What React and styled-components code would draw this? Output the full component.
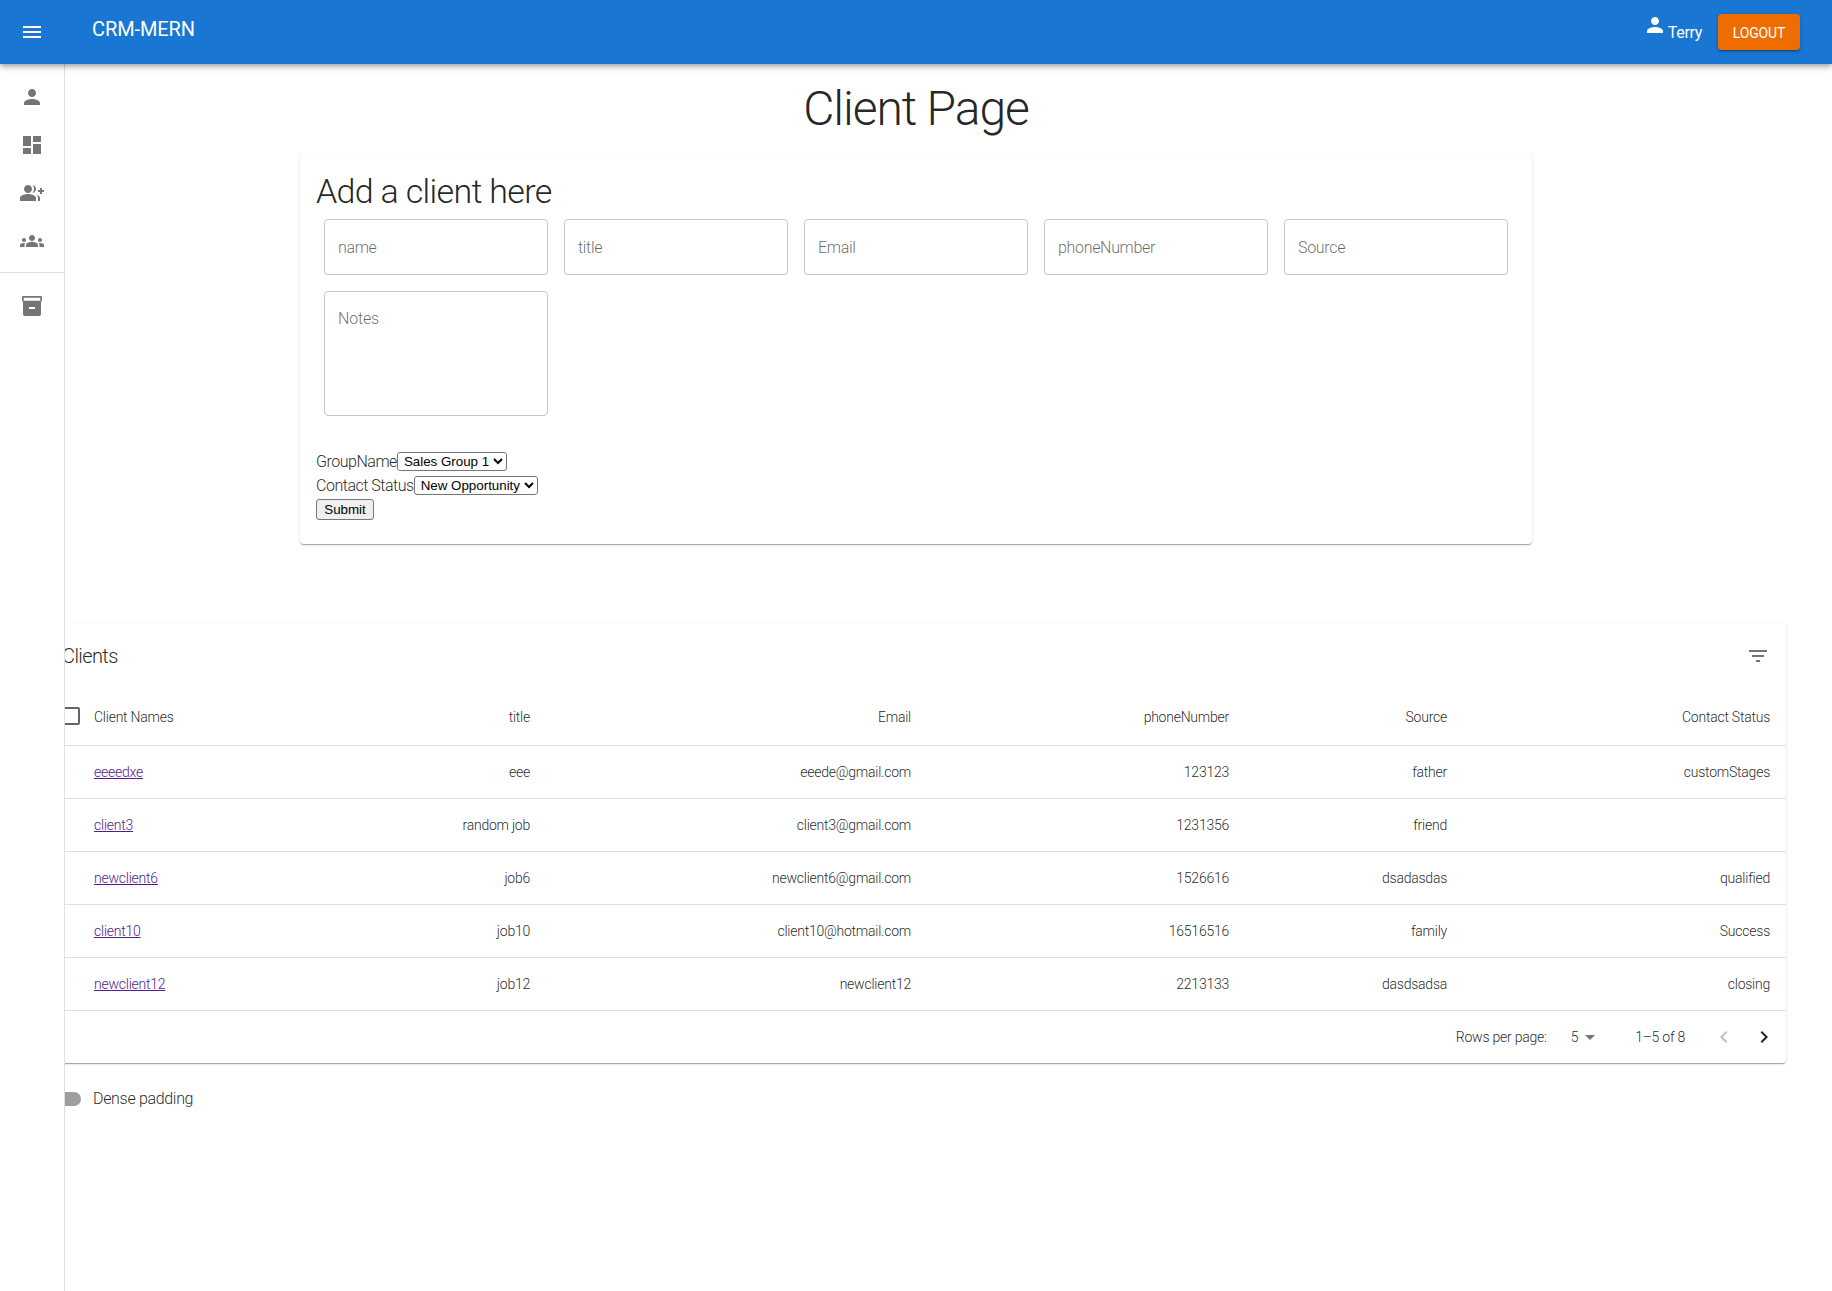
import React from "react";
import styled, { createGlobalStyle } from "styled-components";

const FONT = `Roboto, "Open Sans", "Liberation Sans", sans-serif`;
const NATIVE = `"Liberation Sans", Arial, sans-serif`;

const Global = createGlobalStyle`
  html, body { margin: 0; padding: 0; background: #fff; }
  body { font-family: ${FONT}; font-weight: 300; color: rgba(0,0,0,.87); font-size: 16px; letter-spacing: -0.015em; }
  * { box-sizing: border-box; }
`;

const Shell = styled.div`
  position: relative;
  min-height: 1291px;
  overflow: hidden;
`;
const AppBar = styled.header`
  position: relative;
  z-index: 3;
  height: 64px;
  background: #1976d2;
  color: #fff;
  display: flex;
  align-items: center;
  padding: 0 32px 0 20px;
  box-shadow: 0 2px 4px -1px rgba(0,0,0,.2), 0 4px 5px 0 rgba(0,0,0,.14), 0 1px 10px 0 rgba(0,0,0,.12);
`;
const Brand = styled.div`
  font-size: 20px;
  font-weight: 400;
  letter-spacing: -0.005em;
  margin-left: 48px;
  position: relative;
  top: -3px;
`;
const Spacer = styled.div` flex: 1; `;
const UserBox = styled.div`
  display: flex;
  align-items: center;
  height: 48px;
`;
const UserName = styled.span`
  display: inline-flex;
  align-items: center;
  font-size: 16px;
  font-weight: 400;
  letter-spacing: -0.02em;
  margin-right: 16px;
  svg { position: relative; top: -7px; margin-right: 1px; }
`;
const Logout = styled.button`
  height: 36px;
  width: 82px;
  padding: 1px 0 0;
  border: 0;
  border-radius: 4px;
  background: #ef6c00;
  color: #fff;
  font-family: ${FONT};
  font-size: 14px;
  font-weight: 400;
  letter-spacing: -0.01em;
  text-transform: uppercase;
  box-shadow: 0 3px 1px -2px rgba(0,0,0,.2), 0 2px 2px 0 rgba(0,0,0,.14), 0 1px 5px 0 rgba(0,0,0,.12);
`;
const Sidebar = styled.nav`
  position: absolute;
  z-index: 2;
  left: 0;
  top: 64px;
  bottom: 0;
  width: 65px;
  background: #fff;
  border-right: 1px solid #e0e0e0;
`;
const NavList = styled.div` padding: 9px 0 7px; `;
const NavItem = styled.div`
  height: 48px;
  display: flex;
  align-items: center;
  padding-left: 20px;
  color: #757575;
`;
const Divider = styled.div` height: 1px; background: #e0e0e0; `;
const Main = styled.main`
  padding: 0 46px;
`;
const PageTitle = styled.h1`
  margin: 17px 0 16px;
  font-size: 48px;
  line-height: 56px;
  font-weight: 300;
  letter-spacing: -0.023em;
  text-align: center;
`;
const FormCard = styled.section`
  width: 1232px;
  margin: 0 auto 80px;
  height: 391px;
  padding: 16px;
  background: #fff;
  border-radius: 4px;
  box-shadow: 0 2px 1px -1px rgba(0,0,0,.2), 0 1px 1px 0 rgba(0,0,0,.14), 0 1px 3px 0 rgba(0,0,0,.12);
`;
const FormTitle = styled.h2`
  margin: 0;
  padding-top: 1px;
  height: 42px;
  font-size: 34px;
  line-height: 42px;
  font-weight: 300;
  letter-spacing: -0.02em;
`;
const Fields = styled.div`
  display: flex;
  flex-wrap: wrap;
  gap: 16px;
  padding: 8px 8px 0;
`;
const Input = styled.input`
  width: 224px;
  height: 56px;
  padding: 0 13px;
  border: 1px solid #c4c4c4;
  border-radius: 4px;
  outline: 0;
  font-family: ${FONT};
  font-size: 16px;
  font-weight: 300;
  letter-spacing: -0.02em;
  &::placeholder { color: rgba(0,0,0,.6); opacity: 1; }
`;
const Notes = styled.textarea`
  width: 224px;
  height: 125px;
  padding: 17px 13px;
  border: 1px solid #c4c4c4;
  border-radius: 4px;
  outline: 0;
  resize: none;
  font-family: ${FONT};
  font-size: 16px;
  font-weight: 300;
  line-height: 19px;
  letter-spacing: -0.01em;
  &::placeholder { color: rgba(0,0,0,.6); opacity: 1; }
`;
const SelectRows = styled.div`
  margin-top: 33px;
`;
const SelectRow = styled.div`
  height: 24px;
  display: flex;
  align-items: center;
  font-size: 16px;
  letter-spacing: -0.03em;
`;
const NativeSelect = styled.select`
  font-family: ${NATIVE};
  font-size: 13.33px;
  letter-spacing: 0;
  height: 19px;
  padding: 0 0 0 2px;
  background: #fff;
  color: #000;
  border: 1px solid #767676;
  border-radius: 3px;
`;
const Submit = styled.button`
  font-family: ${NATIVE};
  font-size: 13.33px;
  letter-spacing: 0;
  width: 58px;
  height: 21px;
  padding: 0;
  color: #000;
  background: #efefef;
  border: 1px solid #767676;
  border-radius: 3px;
`;
const TableCard = styled.section`
  background: #fff;
  border-radius: 4px;
  box-shadow: 0 2px 1px -1px rgba(0,0,0,.2), 0 1px 1px 0 rgba(0,0,0,.14), 0 1px 3px 0 rgba(0,0,0,.12);
`;
const TableBar = styled.div`
  height: 64px;
  display: flex;
  align-items: center;
  justify-content: space-between;
  padding: 0 16px;
  color: #757575;
`;
const TableTitle = styled.div`
  font-size: 20px;
  letter-spacing: -0.03em;
  color: rgba(0,0,0,.87);
`;
const Table = styled.table`
  width: 100%;
  border-collapse: collapse;
  table-layout: fixed;
`;
const Row = styled.tr`
  height: ${p => (p.$head ? 57 : 53)}px;
  border-bottom: 1px solid #e0e0e0;
`;
const Cell = styled.td`
  padding: ${p => (p.as === "th" ? "2px" : "0")} 16px 0;
  font-size: 14px;
  font-weight: 300;
  text-align: ${p => (p.$left ? "left" : "right")};
  color: rgba(0,0,0,.87);
`;
const CheckCell = styled.th`
  padding: 0 0 0 13px;
  line-height: 0;
  text-align: left;
  color: #666;
`;
const NameCell = styled(Cell)`
  padding-left: 0;
`;
const ClientLink = styled.a`
  color: #551a8b;
  text-decoration: underline;
`;
const Pager = styled.div`
  height: 52px;
  display: flex;
  align-items: center;
  justify-content: flex-end;
  font-size: 14px;
  padding-right: 10px;
`;
const PagerLabel = styled.span` margin-right: 24px; `;
const PagerSelect = styled.span`
  display: inline-flex;
  align-items: center;
  margin-right: 33px;
  svg { color: #757575; }
`;
const PagerRange = styled.span` margin-right: 27px; `;
const PagerBtn = styled.span`
  display: inline-flex;
  width: 24px;
  margin-left: ${p => (p.$gap ? 16 : 0)}px;
  color: ${p => (p.$off ? "rgba(0,0,0,.26)" : "rgba(0,0,0,.87)")};
`;
const DenseRow = styled.label`
  display: flex;
  align-items: center;
  height: 38px;
  margin-top: 17px;
  font-size: 16px;
  letter-spacing: -0.02em;
`;
const Track = styled.span`
  display: block;
  width: 34px;
  height: 14px;
  margin: 0 12px 0 1px;
  border-radius: 7px;
  background: #9e9e9e;
`;

const Icon = ({ d, size = 24, rule }) => (
  <svg width={size} height={size} viewBox="0 0 24 24" fill="currentColor">
    <path d={d} fillRule={rule} />
  </svg>
);

const P = {
  menu: "M3 18h18v-2H3v2zm0-5h18v-2H3v2zm0-7v2h18V6H3z",
  person: "M12 12c2.21 0 4-1.79 4-4s-1.79-4-4-4-4 1.79-4 4 1.79 4 4 4zm0 2c-2.67 0-8 1.34-8 4v2h16v-2c0-2.66-5.33-4-8-4z",
  dash: "M3 13h8V3H3v10zm0 8h8v-6H3v6zm10 0h8V11h-8v10zm0-18v6h8V3h-8z",
  groupAdd: "M22 9V7h-2v2h-2v2h2v2h2v-2h2V9zM8 12c2.21 0 4-1.79 4-4s-1.79-4-4-4-4 1.79-4 4 1.79 4 4 4zm0 1c-2.67 0-8 1.34-8 4v3h16v-3c0-2.66-5.33-4-8-4zm4.51-8.950C13.430 5.110 14 6.490 14 8s-.57 2.890-1.490 3.950C14.470 11.700 16 10.040 16 8s-1.530-3.700-3.490-3.950zm4.020 9.780C17.420 14.660 18 15.700 18 17v3h2v-3c0-1.450-1.590-2.510-3.470-3.170z",
  groups: "M12 12.75c1.63 0 3.07.39 4.24.9 1.08.48 1.76 1.56 1.76 2.73V18H6v-1.61c0-1.18.68-2.26 1.76-2.73 1.17-.52 2.61-.91 4.24-.91zM4 13c1.1 0 2-.9 2-2s-.9-2-2-2-2 .9-2 2 .9 2 2 2zm1.13 1.1c-.37-.06-.74-.1-1.13-.1-.99 0-1.93.21-2.78.58C.48 14.9 0 15.62 0 16.43V18h4.5v-1.61c0-.83.23-1.61.63-2.29zM20 13c1.1 0 2-.9 2-2s-.9-2-2-2-2 .9-2 2 .9 2 2 2zm4 3.43c0-.81-.48-1.53-1.22-1.85-.85-.37-1.79-.58-2.78-.58-.39 0-.76.04-1.13.1.4.68.63 1.46.63 2.29V18H24v-1.57zM12 6c1.66 0 3 1.34 3 3s-1.34 3-3 3-3-1.34-3-3 1.34-3 3-3z",
  archive: "M3 2h18a1 1 0 0 1 1 1v3.5a1 1 0 0 1-1 1V20a2 2 0 0 1-2 2H5a2 2 0 0 1-2-2V7.500a1 1 0 0 1-1-1V3a1 1 0 0 1 1-1zm.7 1.700V6.700h16.600V3.700H3.700zM9 13v2h6v-2H9z",
  filter: "M10 18h4v-2h-4v2zM3 6v2h18V6H3zm3 7h12v-2H6v2z",
  check: "M19 5v14H5V5h14m0-2H5c-1.100 0-2 .9-2 2v14c0 1.100.9 2 2 2h14c1.100 0 2-.9 2-2V5c0-1.100-.9-2-2-2z",
  caret: "M7 10l5 5 5-5z",
  prev: "M15.410 7.410L14 6l-6 6 6 6 1.410-1.410L10.830 12z",
  next: "M10 6L8.590 7.410 13.170 12l-4.580 4.590L10 18l6-6z",
};

const rows = [
  ["eeeedxe", "eee", "eeede@gmail.com", "123123", "father", "customStages"],
  ["client3", "random job", "client3@gmail.com", "1231356", "friend", ""],
  ["newclient6", "job6", "newclient6@gmail.com", "1526616", "dsadasdas", "qualified"],
  ["client10", "job10", "client10@hotmail.com", "16516516", "family", "Success"],
  ["newclient12", "job12", "newclient12", "2213133", "dasdsadsa", "closing"],
];
const colWidths = [48, 250, 202, 381, 318, 218, 323];

export default function App() {
  return (
    <Shell>
      <Global />
      <AppBar>
        <Icon d={P.menu} />
        <Brand>CRM-MERN</Brand>
        <Spacer />
        <UserBox>
          <UserName>
            <Icon d={P.person} />
            <span>Terry</span>
          </UserName>
          <Logout>Logout</Logout>
        </UserBox>
      </AppBar>
      <Sidebar>
        <NavList>
          <NavItem><Icon d={P.person} /></NavItem>
          <NavItem><Icon d={P.dash} /></NavItem>
          <NavItem><Icon d={P.groupAdd} /></NavItem>
          <NavItem><Icon d={P.groups} /></NavItem>
        </NavList>
        <Divider />
        <NavList>
          <NavItem><Icon d={P.archive} rule="evenodd" /></NavItem>
        </NavList>
      </Sidebar>
      <Main>
        <PageTitle>Client Page</PageTitle>
        <FormCard>
          <FormTitle>Add a client here</FormTitle>
          <Fields>
            <Input placeholder="name" />
            <Input placeholder="title" />
            <Input placeholder="Email" />
            <Input placeholder="phoneNumber" />
            <Input placeholder="Source" />
            <Notes placeholder="Notes" />
          </Fields>
          <SelectRows>
            <SelectRow>
              GroupName
              <NativeSelect defaultValue="Sales Group 1">
                <option>Sales Group 1</option>
              </NativeSelect>
            </SelectRow>
            <SelectRow>
              Contact Status
              <NativeSelect defaultValue="New Opportunity">
                <option>New Opportunity</option>
              </NativeSelect>
            </SelectRow>
            <SelectRow>
              <Submit>Submit</Submit>
            </SelectRow>
          </SelectRows>
        </FormCard>
        <TableCard>
          <TableBar>
            <TableTitle>Clients</TableTitle>
            <Icon d={P.filter} />
          </TableBar>
          <Table>
            <colgroup>
              {colWidths.map((w, i) => <col key={i} style={{ width: w }} />)}
            </colgroup>
            <thead>
              <Row $head>
                <CheckCell><Icon d={P.check} /></CheckCell>
                <NameCell as="th" $left>Client Names</NameCell>
                <Cell as="th">title</Cell>
                <Cell as="th">Email</Cell>
                <Cell as="th">phoneNumber</Cell>
                <Cell as="th">Source</Cell>
                <Cell as="th">Contact Status</Cell>
              </Row>
            </thead>
            <tbody>
              {rows.map(r => (
                <Row key={r[0]}>
                  <td />
                  <NameCell $left><ClientLink href="#">{r[0]}</ClientLink></NameCell>
                  {r.slice(1).map((c, i) => <Cell key={i}>{c}</Cell>)}
                </Row>
              ))}
            </tbody>
          </Table>
          <Pager>
            <PagerLabel>Rows per page:</PagerLabel>
            <PagerSelect>5<Icon d={P.caret} /></PagerSelect>
            <PagerRange>1–5 of 8</PagerRange>
            <PagerBtn $off><Icon d={P.prev} /></PagerBtn>
            <PagerBtn $gap><Icon d={P.next} /></PagerBtn>
          </Pager>
        </TableCard>
        <DenseRow>
          <Track />
          Dense padding
        </DenseRow>
      </Main>
    </Shell>
  );
}
